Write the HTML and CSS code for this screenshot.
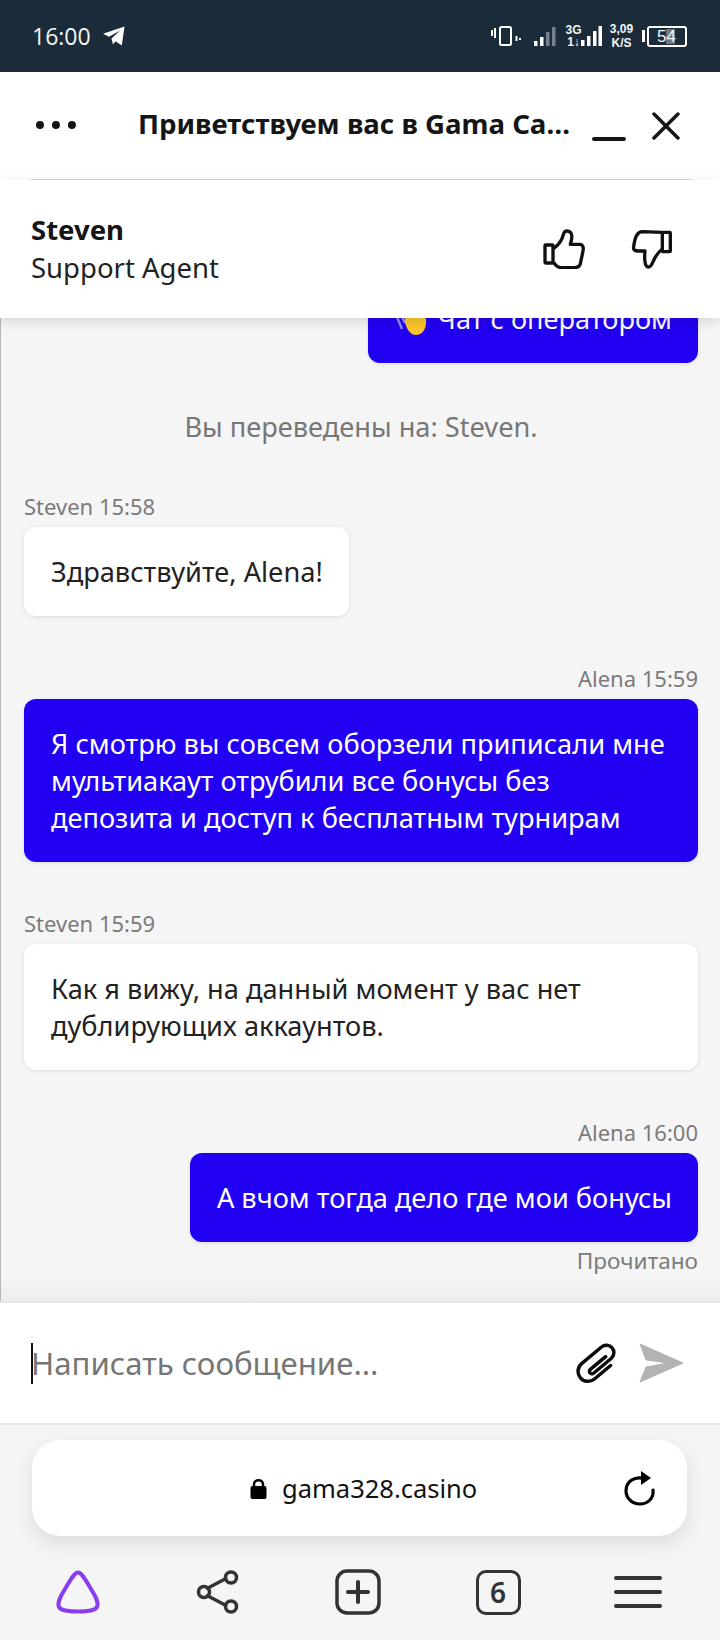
FILE: index.html
```html
<!DOCTYPE html>
<html lang="ru">

<head>
    <meta charset="utf-8">
    <title>Gama Casino</title>
    <link rel="stylesheet" href="styles.css">
</head>

<body>
    <div class="screen">
        <div class="status-bar">
            <span class="status-time">16:00</span>
            <svg class="status-plane" width="23" height="20" viewBox="0 0 23 20">
                <path d="M22.5 0.5 L19.8 19.5 L13.5 15.2 L11 18.5 L9.5 12.5 L18 4.5 L7 10.8 L1 7.8 Z" fill="#fff" />
            </svg>
            <div class="status-right">
                <svg width="30" height="22" viewBox="0 0 30 22">
                    <path d="M1 5v6M4 3v10M25.500 11v5M29 13v2" stroke="#fff" stroke-width="2" fill="none" />
                    <rect x="9" y="2" width="11" height="18" rx="1.500" fill="none" stroke="#fff" stroke-width="2" />
                </svg>
                <svg class="signal-one" width="22" height="22" viewBox="0 0 22 22">
                    <rect x="0" y="16" width="3.500" height="5" fill="#fff" />
                    <rect x="6" y="12" width="3.500" height="9" fill="#fff" />
                    <rect x="12" y="7" width="3.500" height="14" fill="#78828c" />
                    <rect x="18" y="2" width="3.500" height="19" fill="#78828c" />
                </svg>
                <div class="net-type">3G<br>1↓</div>
                <svg class="signal-two" width="21" height="22" viewBox="0 0 21 22">
                    <rect x="0" y="15" width="3.500" height="6" fill="#fff" />
                    <rect x="6" y="11" width="3.500" height="10" fill="#fff" />
                    <rect x="12" y="6" width="3.500" height="15" fill="#fff" />
                    <rect x="17.500" y="1" width="3.500" height="20" fill="#fff" />
                </svg>
                <div class="net-speed">3,09<br>K/S</div>
                <div class="battery-tip"></div>
                <div class="battery"><span class="battery-fill"></span><span class="battery-num">54</span></div>
            </div>
        </div>

        <div class="top-head">
            <svg class="dots" width="40" height="10" viewBox="0 0 40 10">
                <circle cx="4" cy="5" r="4" fill="#151515" />
                <circle cx="20" cy="5" r="4" fill="#151515" />
                <circle cx="36" cy="5" r="4" fill="#151515" />
            </svg>
            <div class="head-title">Приветствуем вас в Gama Casino</div>
            <svg class="head-min" width="34" height="8" viewBox="0 0 34 8">
                <path d="M2 4H32" stroke="#151515" stroke-width="4" stroke-linecap="round" />
            </svg>
            <svg class="head-close" width="28" height="28" viewBox="0 0 28 28">
                <path d="M2 2L26 26M26 2L2 26" stroke="#151515" stroke-width="3.500" stroke-linecap="round" />
            </svg>
        </div>

        <div class="agent-panel">
            <div class="agent-info">
                <div class="agent-name">Steven</div>
                <div class="agent-role">Support Agent</div>
            </div>
            <svg class="thumb-up" width="42" height="40" viewBox="0 0 126 120">
                <rect x="6" y="48" width="24" height="54" rx="2" fill="none" stroke="#111" stroke-width="10" />
                <path d="M32 58C48 48 58 30 62 14C66 2 84 4 86 18C88 30 84 38 82 46L110 46C120 46 122 56 120 66L112 104C110 112 104 116 94 116L56 116C46 116 38 110 32 100" fill="none" stroke="#111" stroke-width="10" stroke-linejoin="round" />
            </svg>
            <svg class="thumb-down" width="42" height="40" viewBox="0 0 126 120">
                <rect x="94" y="10" width="24" height="58" rx="2" fill="none" stroke="#111" stroke-width="10" />
                <path d="M94 10L34 8C18 8 12 24 8 52C6 64 12 66 22 66L42 66C40 84 40 114 52 114C68 114 62 84 94 60" fill="none" stroke="#111" stroke-width="10" stroke-linejoin="round" />
            </svg>
        </div>

        <div class="chat-area">
            <div class="msg msg-out msg-first">
                <div class="bubble bubble-blue">
                    <svg class="wave-emoji" width="34" height="34" viewBox="0 0 34 34">
                        <path d="M2 14L7 26M6 12L10 20" stroke="#8d8df0" stroke-width="2.500" fill="none" />
                        <path d="M9 4L22 2L31 16C32 26 27 32 21 32C15 32 12 26 10 20Z" fill="#fdc52c" />
                    </svg>
                    Чат с оператором
                </div>
            </div>
            <div class="system-note">Вы переведены на: Steven.</div>
            <div class="msg msg-in">
                <div class="msg-meta">Steven 15:58</div>
                <div class="bubble bubble-white">Здравствуйте, Alena!</div>
            </div>
            <div class="msg msg-out msg-long">
                <div class="msg-meta">Alena 15:59</div>
                <div class="bubble bubble-blue">Я смотрю вы совсем оборзели приписали мне мультиакаут отрубили все бонусы без депозита и доступ к бесплатным турнирам</div>
            </div>
            <div class="msg msg-in msg-near">
                <div class="msg-meta">Steven 15:59</div>
                <div class="bubble bubble-white bubble-wide">Как я вижу, на данный момент у вас нет дублирующих аккаунтов.</div>
            </div>
            <div class="msg msg-out msg-last">
                <div class="msg-meta">Alena 16:00</div>
                <div class="bubble bubble-blue">А вчом тогда дело где мои бонусы</div>
                <div class="msg-read">Прочитано</div>
            </div>
        </div>

        <div class="composer">
            <span class="caret"></span>
            <span class="composer-hint">Написать сообщение...</span>
            <svg class="clip-icon" width="44" height="44" viewBox="-22 -22 44 44">
                <path d="M10 -8L10 13A10 10 0 0 1 -10 13L-10 -13A7.500 7.500 0 0 1 5 -13L5 10A2.500 2.500 0 0 1 0 10L0 -10" transform="rotate(50)" fill="none" stroke="#0c0c0c" stroke-width="3.500" stroke-linecap="round" />
            </svg>
            <svg class="send-icon" width="44" height="41" viewBox="0 0 44 41">
                <path d="M1 1L44 20L1 39L7 24L29 20L7 17Z" fill="#b3b3b3" stroke="#b3b3b3" stroke-width="1" stroke-linejoin="round" />
            </svg>
        </div>

        <div class="browser-bar">
            <div class="url-box">
                <div class="url-center">
                    <svg class="lock-icon" width="17" height="21" viewBox="0 0 17 21">
                        <path d="M4 9V6C4 1 13 1 13 6V9" fill="none" stroke="#000" stroke-width="2.500" />
                        <rect x="0.500" y="8" width="16" height="13" rx="2" fill="#000" />
                    </svg>
                    <span class="url-text">gama328.casino</span>
                </div>
                <svg class="reload-icon" width="32" height="36" viewBox="0 0 32 36">
                    <path d="M22 9C10 5 2 12 2 21C2 28 8 34 16 34C24 34 30 28 29 20" fill="none" stroke="#000" stroke-width="3.200" stroke-linecap="round" />
                    <path d="M17 1L27 8L17 15Z" fill="#000" />
                </svg>
            </div>
            <div class="nav-row">
                <div class="nav-cell">
                    <svg width="46" height="44" viewBox="0 0 46 44">
                        <path d="M23 2.500C27 2.500 31 11 36 19C41 27 44 33 42 37C40 41 31 41.500 23 41.500C15 41.500 6 41 4 37C2 33 5 27 10 19C15 11 19 2.500 23 2.500Z" fill="none" stroke="#8a3cf0" stroke-width="4" stroke-linejoin="round" />
                    </svg>
                </div>
                <div class="nav-cell">
                    <svg width="44" height="44" viewBox="0 0 44 44">
                        <path d="M10 19L31 8M10 25L31 36" stroke="#333" stroke-width="3.500" />
                        <circle cx="8" cy="22" r="5.500" fill="none" stroke="#333" stroke-width="3.500" />
                        <circle cx="35" cy="7.500" r="5.500" fill="none" stroke="#333" stroke-width="3.500" />
                        <circle cx="35" cy="36.500" r="5.500" fill="none" stroke="#333" stroke-width="3.500" />
                    </svg>
                </div>
                <div class="nav-cell">
                    <svg width="46" height="46" viewBox="0 0 46 46">
                        <rect x="2" y="2" width="42" height="42" rx="10" fill="none" stroke="#333" stroke-width="3.500" />
                        <path d="M13 23H33M23 13V33" stroke="#333" stroke-width="4" stroke-linecap="round" />
                    </svg>
                </div>
                <div class="nav-cell">
                    <div class="tab-count">6</div>
                </div>
                <div class="nav-cell">
                    <svg width="48" height="34" viewBox="0 0 48 34">
                        <path d="M2 3H46M2 17H46M2 31H46" stroke="#333" stroke-width="4" stroke-linecap="round" />
                    </svg>
                </div>
            </div>
        </div>
    </div>
</body>

</html>
```
FILE: styles.css
```css
html,
body {
    margin: 0;
    padding: 0;
}

body {
    font-family: "Noto Sans", "Open Sans", sans-serif;
    background: #f5f5f5;
}

.screen {
    width: 720px;
    height: 1640px;
    display: flex;
    flex-direction: column;
    overflow: hidden;
}

/* status bar */
.status-bar {
    height: 72px;
    flex: none;
    background: #1c2b39;
    color: #f4f6f7;
    display: flex;
    align-items: center;
    padding: 0 33px 0 32px;
    box-sizing: border-box;
}

.status-time {
    font-family: "Open Sans", sans-serif;
    font-size: 23px;
}

.status-plane {
    margin-left: 11px;
}

.status-right {
    margin-left: auto;
    display: flex;
    align-items: center;
    font-family: "Liberation Sans", sans-serif;
}

.signal-one {
    margin-left: 13px;
}

.net-type {
    width: 17px;
    margin-left: 9px;
    font-size: 12px;
    line-height: 12px;
    font-weight: bold;
    text-align: center;
    white-space: nowrap;
}

.signal-two {
    margin-left: -1px;
}

.net-speed {
    width: 25px;
    margin-left: 7px;
    font-size: 12px;
    line-height: 14px;
    font-weight: bold;
    text-align: center;
}

.battery-tip {
    width: 3px;
    height: 12px;
    background: #fff;
    margin-left: 8px;
    margin-right: 2px;
}

.battery {
    width: 40px;
    height: 21px;
    border: 2px solid #fff;
    border-radius: 3px;
    box-sizing: border-box;
    position: relative;
}

.battery-fill {
    position: absolute;
    left: 17px;
    top: 1px;
    bottom: 1px;
    width: 9px;
    background: #6f7982;
}

.battery-num {
    position: absolute;
    left: 8px;
    top: -1px;
    font-size: 17px;
    line-height: 19px;
}

/* head */
.top-head {
    height: 108px;
    flex: none;
    background: #fff;
    display: flex;
    align-items: center;
    padding: 0 40px 0 36px;
    box-sizing: border-box;
    position: relative;
}

.top-head::after {
    content: "";
    position: absolute;
    left: 31px;
    right: 29px;
    bottom: -1px;
    height: 2px;
    background: #d9d9d9;
}

.dots {
    margin-bottom: 2px;
}

.head-title {
    width: 437px;
    margin-left: 62px;
    margin-bottom: 6px;
    font-size: 27.600px;
    font-weight: 700;
    color: #151515;
    white-space: nowrap;
    overflow: hidden;
    text-overflow: ellipsis;
}

.head-min {
    margin-left: 18px;
    margin-top: 26px;
}

.head-close {
    margin-left: 26px;
}

.agent-panel {
    height: 138px;
    flex: none;
    background: #fff;
    display: flex;
    align-items: center;
    padding: 0 47px 0 31px;
    box-sizing: border-box;
    position: relative;
    z-index: 2;
    box-shadow: 0 4px 12px rgba(0, 0, 0, .12);
}

.agent-info {
    flex: 1;
}

.agent-name {
    font-size: 27.500px;
    line-height: 36px;
    font-weight: 700;
    color: #151515;
}

.agent-role {
    font-size: 27.500px;
    line-height: 39px;
    color: #222;
}

.thumb-down {
    margin-left: 46px;
}

/* chat */
.chat-area {
    height: 983px;
    flex: none;
    box-sizing: border-box;
    background: linear-gradient(#f5f5f5 960px, #ececec);
    border-left: 1px solid #b5b5b5;
    display: flex;
    flex-direction: column;
    justify-content: flex-end;
    overflow: hidden;
    padding: 0 22px 25px 23px;
}

.msg {
    display: flex;
    flex-direction: column;
    margin-top: 49px;
}

.msg-in {
    align-items: flex-start;
}

.msg-out {
    align-items: flex-end;
}

.msg-first {
    margin-top: 0;
    flex: none;
}

.msg-long {
    margin-top: 47px;
}

.msg-near {
    margin-top: 46px;
}

.msg-meta,
.msg-read {
    font-size: 22px;
    line-height: 30px;
    color: #7b7b7b;
}

.msg-meta {
    margin-bottom: 6px;
}

.msg-read {
    font-size: 22.600px;
    margin-top: 4px;
}

.msg-last {
    margin-top: 47px;
}

.bubble {
    font-size: 27.200px;
    line-height: 37px;
    padding: 26px 26px 26px 27px;
    border-radius: 12px;
    box-shadow: 0 1px 4px rgba(0, 0, 0, .1);
}

.bubble-white {
    background: #fff;
    color: #222;
}

.bubble-wide {
    width: 100%;
    box-sizing: border-box;
}

.bubble-blue {
    background: #2200f2;
    color: #fff;
}

.wave-emoji {
    vertical-align: -8px;
    margin-right: 2px;
}

.system-note {
    text-align: center;
    font-size: 27.200px;
    line-height: 37px;
    color: #777;
    margin-top: 45px;
    margin-bottom: -3px;
}

/* composer */
.composer {
    height: 124px;
    flex: none;
    background: #fff;
    border-top: 2px solid #e6e6e6;
    border-bottom: 2px solid #e6e6e6;
    box-sizing: border-box;
    display: flex;
    align-items: center;
    padding: 0 37px 0 31px;
}

.caret {
    width: 2px;
    height: 41px;
    background: #111;
    margin-right: -2px;
}

.composer-hint {
    flex: 1;
    font-size: 31.200px;
    color: #767676;
}

.send-icon {
    margin-left: 19px;
}

/* browser bar */
.browser-bar {
    flex: 1;
    background: #f5f5f5;
    padding: 15px 33px 0 32px;
}

.url-box {
    height: 96px;
    background: #fff;
    border-radius: 28px;
    box-shadow: 0 8px 20px rgba(0, 0, 0, .1);
    display: flex;
    align-items: center;
    padding-right: 31px;
    padding-left: 218px;
}

.url-center {
    flex: 1;
    display: flex;
    align-items: center;
}

.url-text {
    margin-left: 15px;
    font-size: 25.500px;
    color: #111;
}

.nav-row {
    display: grid;
    grid-template-columns: repeat(5, 140px);
    margin: 34px 0 0 -24px;
}

.nav-cell {
    display: flex;
    justify-content: center;
    align-items: center;
    height: 44px;
}

.tab-count {
    width: 39px;
    height: 39px;
    border: 3.500px solid #333;
    border-radius: 10px;
    display: flex;
    align-items: center;
    justify-content: center;
    font-size: 28px;
    font-weight: 600;
    color: #333;
}
```
